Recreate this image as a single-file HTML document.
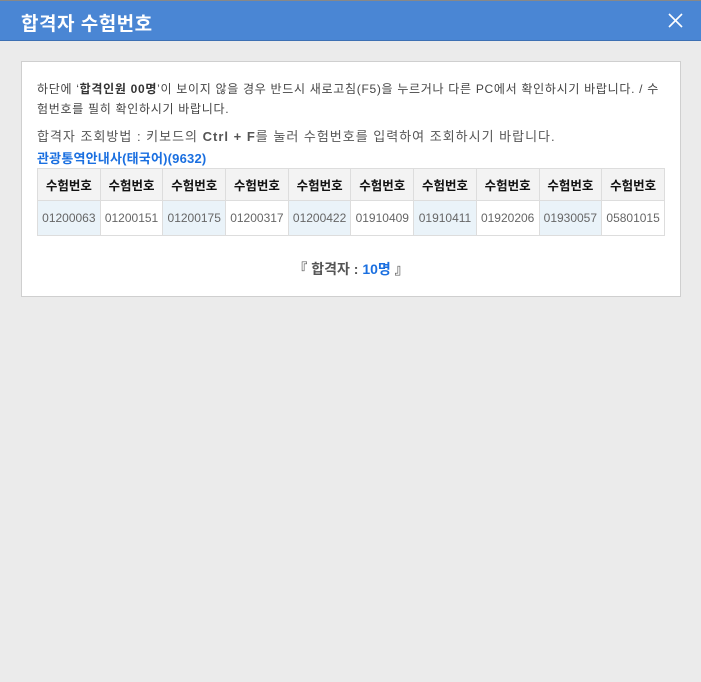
<!DOCTYPE html>
<html><head><meta charset="utf-8"><style>
body{margin:0;width:701px;height:682px;background:#ebebeb;font-family:"Liberation Sans","Noto Sans CJK KR",sans-serif;overflow:hidden;position:relative}
.top{position:absolute;left:0;top:0;width:701px;height:1px;background:#888}
.hd{position:absolute;left:0;top:1px;width:701px;height:39px;background:#4a86d4;border-bottom:1px solid #3d70b3}
.hd h1{margin:0;position:absolute;left:21px;top:8px;font-size:19px;color:#fff;font-weight:bold;letter-spacing:0.5px}
.x{position:absolute;left:668px;top:12px}
.card{position:absolute;left:21px;top:61px;width:658px;height:234px;background:#fff;border:1px solid #cfcfcf}
.p1{position:absolute;left:15px;top:17px;width:632px;font-size:12px;line-height:20px;color:#444;letter-spacing:0.7px}
.p2{position:absolute;left:15px;top:64px;font-size:13px;color:#555;letter-spacing:1px;white-space:nowrap}
.p3{position:absolute;left:15px;top:86px;font-size:13px;color:#1a6fe0;font-weight:bold;letter-spacing:0.2px}
table{position:absolute;left:15px;top:106px;border-collapse:collapse;width:628px;table-layout:fixed}
td,th{border:1px solid #ddd;text-align:center;padding:0;font-size:12.5px}
th{height:31px;background:#f3f3f3;color:#111;font-weight:bold}
td{height:34px;color:#666;font-size:12px}
td.b{background:#eaf3f9}
.tot{position:absolute;left:0;width:658px;top:197px;text-align:center;font-size:14px;font-weight:bold;color:#555}
.tot span{color:#1a6fe0}
</style></head><body>
<div class="top"></div>
<div class="hd"><h1>합격자 수험번호</h1>
<svg class="x" width="15" height="15" viewBox="0 0 15 15"><path d="M1 1L14 14M14 1L1 14" stroke="#fff" stroke-width="1.6"/></svg></div>
<div class="card">
<div class="p1">하단에 ‘<b style="color:#333">합격인원 00명</b>’이 보이지 않을 경우 반드시 새로고침(F5)을 누르거나 다른 PC에서 확인하시기 바랍니다. / 수험번호를 필히 확인하시기 바랍니다.</div>
<div class="p2">합격자 조회방법 : 키보드의 <b>Ctrl + F</b>를 눌러 수험번호를 입력하여 조회하시기 바랍니다.</div>
<div class="p3">관광통역안내사(태국어)(9632)</div>
<table><tr><th>수험번호</th><th>수험번호</th><th>수험번호</th><th>수험번호</th><th>수험번호</th><th>수험번호</th><th>수험번호</th><th>수험번호</th><th>수험번호</th><th>수험번호</th></tr>
<tr><td class="b">01200063</td><td>01200151</td><td class="b">01200175</td><td>01200317</td><td class="b">01200422</td><td>01910409</td><td class="b">01910411</td><td>01920206</td><td class="b">01930057</td><td>05801015</td></tr></table>
<div class="tot">『 합격자 : <span>10명</span> 』</div>
</div>
</body></html>
